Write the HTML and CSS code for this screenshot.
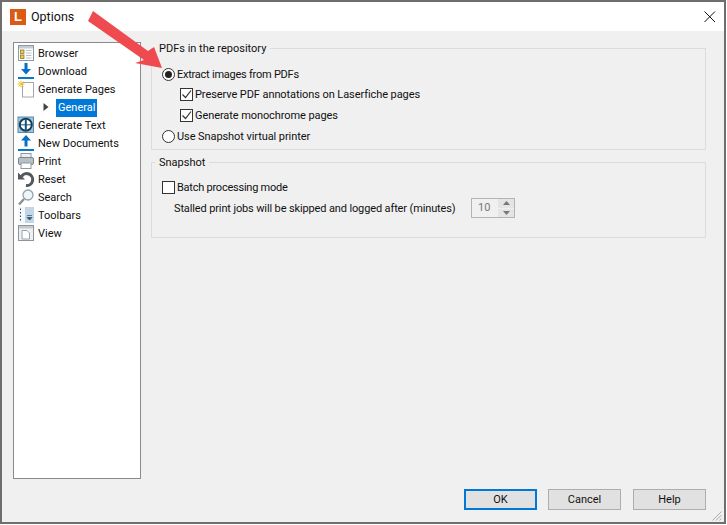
FILE: index.html
```html
<!DOCTYPE html>
<html lang="en">
<head>
<meta charset="utf-8">
<title>Options</title>
<link rel="stylesheet" href="styles.css">
</head>
<body>
<div class="window">
  <header class="titlebar">
    <span class="applogo">L</span>
    <span class="title">Options</span>
    <svg class="close" width="12" height="12" viewBox="0 0 12 12"><path d="M.5.5l10.500 10.500M11 .5L.5 11" stroke="#111" stroke-width="1" fill="none"/></svg>
  </header>
  <main class="main">
    <nav class="tree">
      <div class="row">
        <svg class="ico" width="18" height="18" viewBox="0 0 18 18"><rect x="1.500" y="1.500" width="15" height="15" fill="#fff" stroke="#8d9aa6"/><rect x="2" y="2" width="14" height="2.500" fill="#c3ccd4"/><rect x="3.500" y="6" width="3.500" height="3.500" fill="#f2c94a" stroke="#7a6a20" stroke-width=".7"/><rect x="3.500" y="11" width="3.500" height="3.500" fill="#f2c94a" stroke="#7a6a20" stroke-width=".7"/><path d="M9 6.500h5.500M9 9h5.500M9 11.500h5.500M9 14h5.500" stroke="#b8c2cb"/></svg>
        <span>Browser</span>
      </div>
      <div class="row">
        <svg class="ico" width="18" height="18" viewBox="0 0 18 18"><path d="M7.500 1h3v6h3.500l-5 5.500-5-5.500h3.500z" fill="#0a6fc2"/><rect x="1" y="15" width="16" height="2" fill="#0a78c8"/></svg>
        <span>Download</span>
      </div>
      <div class="row">
        <svg class="ico" width="18" height="18" viewBox="0 0 18 18"><rect x="5.500" y="2.500" width="11" height="14.500" fill="#fff" stroke="#a8a8a8"/><path d="M4 .5v7M.5 4h7M1.500 1.500l5 5M6.500 1.500l-5 5" stroke="#f0c830" stroke-width="1"/></svg>
        <span>Generate Pages</span>
      </div>
      <div class="row row-sub">
        <svg class="caret" width="6" height="10" viewBox="0 0 6 10"><path d="M.5 1l5 4-5 4z" fill="#444"/></svg>
        <span class="selected">General</span>
      </div>
      <div class="row">
        <svg class="ico" width="18" height="18" viewBox="0 0 18 18"><rect x="1" y="1" width="15.500" height="15.500" fill="#9fc4da" stroke="#5f8aa8"/><circle cx="8.800" cy="8.800" r="6" fill="#fff" stroke="#123e5e" stroke-width="2"/><path d="M8.800 3v12" stroke="#1b5377" stroke-width="2"/><path d="M3.500 8.800h10.500" stroke="#1b5377" stroke-width="1"/></svg>
        <span>Generate Text</span>
      </div>
      <div class="row">
        <svg class="ico" width="18" height="18" viewBox="0 0 18 18"><path d="M7.500 12.500h3v-6h3.500l-5-5.500-5 5.500h3.500z" fill="#0a6fc2"/><rect x="1" y="15" width="16" height="2" fill="#0a78c8"/></svg>
        <span>New Documents</span>
      </div>
      <div class="row">
        <svg class="ico" width="18" height="18" viewBox="0 0 18 18"><rect x="4" y="1.500" width="10" height="4" fill="#eee" stroke="#8d98a0"/><rect x="1.500" y="5.500" width="15" height="7" rx="1.500" fill="#b6c0c7" stroke="#7c868e"/><rect x="4" y="11" width="10" height="5.500" fill="#fff" stroke="#8d98a0"/></svg>
        <span>Print</span>
      </div>
      <div class="row">
        <svg class="ico" width="18" height="18" viewBox="0 0 18 18"><path d="M4.500 6.500A6 6 0 1 1 9 15.500" fill="none" stroke="#55585a" stroke-width="3"/><path d="M1 2.500v7h7z" fill="#55585a"/></svg>
        <span>Reset</span>
      </div>
      <div class="row">
        <svg class="ico" width="18" height="18" viewBox="0 0 18 18"><circle cx="11" cy="7" r="5" fill="#eef6fb" stroke="#93a3ad" stroke-width="1.300"/><path d="M7 11l-5 5.500" stroke="#8a8f92" stroke-width="2.400"/></svg>
        <span>Search</span>
      </div>
      <div class="row">
        <svg class="ico" width="18" height="18" viewBox="0 0 18 18"><rect x="1" y="1" width="16" height="16" fill="#f4f8fb"/><rect x="8" y="1" width="9" height="16" fill="#c2d6e8"/><path d="M3.500 2.500v12" stroke="#445" stroke-dasharray="1.500 2" stroke-width="1"/><path d="M10 9.500h5M10 11.500h5l-2.500 2.500z" fill="#33506a" stroke="#33506a" stroke-width=".7"/></svg>
        <span>Toolbars</span>
      </div>
      <div class="row">
        <svg class="ico" width="18" height="18" viewBox="0 0 18 18"><rect x="1.500" y="1.500" width="15" height="15" fill="#eef0f2" stroke="#8d959b"/><rect x="2" y="2" width="14" height="2.500" fill="#c3c9ce"/><path d="M5 6.500h5l2.500 2.500v6h-7.500z" fill="#fff" stroke="#9aa2a8"/></svg>
        <span>View</span>
      </div>
    </nav>
    <section class="panel">
      <fieldset class="group group-pdf">
        <legend>PDFs in the repository</legend>
        <label class="opt opt-tight"><span class="radio on"></span>Extract images from PDFs</label>
        <label class="opt opt-sub"><span class="check"><svg width="11" height="11" viewBox="0 0 11 11"><path d="M1.500 5.500l3 3 5.500-7" fill="none" stroke="#333" stroke-width="1.200"/></svg></span>Preserve PDF annotations on Laserfiche pages</label>
        <label class="opt opt-sub"><span class="check"><svg width="11" height="11" viewBox="0 0 11 11"><path d="M1.500 5.500l3 3 5.500-7" fill="none" stroke="#333" stroke-width="1.200"/></svg></span>Generate monochrome pages</label>
        <label class="opt"><span class="radio"></span>Use Snapshot virtual printer</label>
      </fieldset>
      <fieldset class="group group-snap">
        <legend>Snapshot</legend>
        <label class="opt opt-batch opt-tight"><span class="check"></span>Batch processing mode</label>
        <div class="stall">
          <span class="stall-label">Stalled print jobs will be skipped and logged after (minutes)</span>
          <span class="spin">
            <span class="spin-val">10</span>
            <span class="spin-btns">
              <span class="spin-btn"><svg width="7" height="4" viewBox="0 0 7 4"><path d="M3.500 0l3.500 4h-7z" fill="#777"/></svg></span>
              <span class="spin-btn"><svg width="7" height="4" viewBox="0 0 7 4"><path d="M0 0h7l-3.500 4z" fill="#777"/></svg></span>
            </span>
          </span>
        </div>
      </fieldset>
    </section>
  </main>
  <footer class="footer">
    <button class="btn btn-default">OK</button>
    <button class="btn">Cancel</button>
    <button class="btn btn-help">Help</button>
    <svg class="grip" width="10" height="10" viewBox="0 0 10 10"><path d="M9.500.5l-9 9M9.500 4l-5.500 5.500M9.500 7.500l-2 2" stroke="#aaa" stroke-width="1" fill="none"/></svg>
  </footer>
  <svg class="arrow" width="80" height="65" viewBox="87 9 80 65"><path d="M93 11L148 51L154 47L162 68L135 63L144 60L88 21Z" fill="#ef4a50"/></svg>
</div>
</body>
</html>
```
FILE: styles.css
```css
* { box-sizing: border-box; }
html, body { margin: 0; padding: 0; background: #fff; }
body { width: 727px; height: 525px; overflow: hidden; font-family: "Roboto", sans-serif; font-size: 11px; color: #111; }
.window { position: relative; width: 726px; height: 524px; border: 2px solid #6e6e6e; background: #f0f0f0; display: flex; flex-direction: column; }
.titlebar { height: 29px; flex: none; background: #fff; display: flex; align-items: center; padding: 0 8px 0 8px; }
.applogo { width: 16px; height: 16px; background: #dc5a14; color: #fff; font: bold 13px/16px "Liberation Sans", sans-serif; text-align: center; margin-right: 5px; }
.title { font-size: 12.500px; flex: 1; }
.close { flex: none; }
.main { flex: 1; display: flex; padding: 11px 18px 0 11px; gap: 10px; min-height: 0; }
.tree { width: 128px; height: 437px; flex: none; background: #fff; border: 1px solid #8a8a8a; padding: 1px 0 0 3px; }
.row { height: 18px; display: flex; align-items: center; white-space: nowrap; gap: 2px; }
.ico { flex: none; margin-right: 1px; }
.row-sub { padding-left: 26px; gap: 7px; }
.caret { flex: none; }
.selected { background: #0078d7; color: #fff; padding: 0 2px; height: 18px; line-height: 18px; width: 41px; margin-top: 2px; }
.panel { flex: 1; display: flex; flex-direction: column; gap: 5px; margin-top: -1px; }
.group { margin: 0; border: 1px solid #dcdcdc; padding: 0; min-width: 0; }
.group legend { margin-left: -7px; padding: 2px 4px 0; line-height: 12px; }
.group-pdf { height: 109px; padding: 8.800px 10px 0; display: flex; flex-direction: column; }
.group-snap { height: 83px; padding: 8px 10px 0; }
.opt { display: flex; align-items: center; height: 20.670px; gap: 2px; white-space: nowrap; letter-spacing: -.08px; }
.opt-tight { letter-spacing: -.24px; }
.opt-batch { height: 21px; }
.opt-sub { padding-left: 18px; }
.radio { width: 13px; height: 13px; border: 1px solid #333; border-radius: 50%; background: #fff; flex: none; display: flex; align-items: center; justify-content: center; }
.radio.on::after { content: ""; width: 7px; height: 7px; border-radius: 50%; background: #222; }
.check { width: 13px; height: 13px; border: 1px solid #333; background: #fff; flex: none; display: flex; align-items: center; justify-content: center; }
.stall { display: flex; align-items: center; height: 20px; padding-left: 12px; }
.stall-label { width: 297px; white-space: nowrap; letter-spacing: -.13px; }
.spin { width: 44px; height: 20px; border: 1px solid #b4b4b4; display: flex; background: #f0f0f0; }
.spin-val { flex: 1; color: #777; padding-left: 6px; line-height: 18px; }
.spin-btns { width: 16px; display: flex; flex-direction: column; gap: 1px; }
.spin-btn { flex: 1; background: #e4e4e4; display: flex; align-items: center; justify-content: center; }
.footer { position: relative; height: 36px; flex: none; display: flex; justify-content: flex-end; padding: 3px 18px 0 0; gap: 11px; align-items: flex-start; }
.btn { width: 73px; height: 21px; border: 1px solid #adadad; background: #e1e1e1; font: inherit; color: #111; padding: 0; }
.btn-default { border: 2px solid #0078d7; }
.btn-help { margin-left: 1px; }
.grip { position: absolute; right: 2px; bottom: 1px; }
.arrow { position: absolute; left: 85px; top: 7px; }
```
